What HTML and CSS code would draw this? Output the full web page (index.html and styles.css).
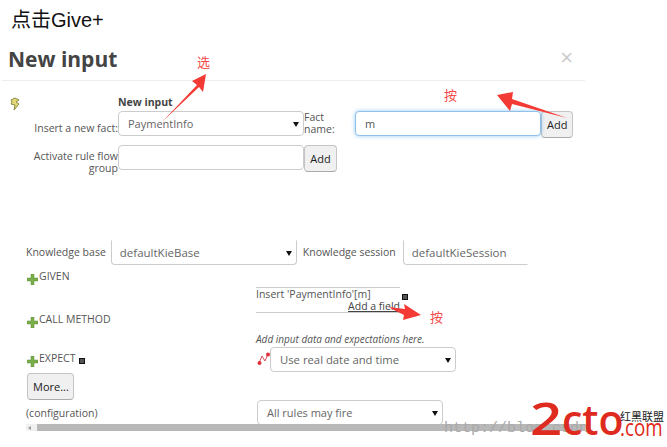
FILE: index.html
```html
<!DOCTYPE html>
<html lang="zh">
<head>
  <meta charset="UTF-8" />
  <title>New input</title>
  <link rel="stylesheet" href="styles.css">
</head>
<body>
  <div class="page">
    <p class="caption">点击Give+</p>

    <div class="modal">
      <header class="modal-head">
        <h3>New input</h3>
        <span class="close">×</span>
      </header>

      <!-- new fact form -->
      <section class="fact-form">
        <svg class="bolt" width="10" height="14" viewBox="0 0 10 14"><path d="M5 1 L9 3 L6 5 L9 7 L4 13 L5 8 L1 7 L2 5 L1 3 Z" fill="#e3d878" stroke="#8a8a3c"/></svg>
        <b class="fact-title">New input</b>
        <label class="fact-label">Insert a new fact:</label>
        <div class="field select">PaymentInfo<i class="arrow"></i></div>
        <label class="name-label">Fact name:</label>
        <div class="field focused">m</div>
        <button class="btn">Add</button>
        <label class="fact-label flow">Activate rule flow group</label>
        <div class="field flow-field"></div>
        <button class="btn flow-add">Add</button>
      </section>

      <!-- knowledge row -->
      <section class="kie-row">
        <label>Knowledge base</label>
        <div class="field select cut base">defaultKieBase<i class="arrow"></i></div>
        <label class="session-label">Knowledge session</label>
        <div class="field cut session">defaultKieSession</div>
      </section>

      <section class="scenario">
        <div class="left-col">
          <div class="section-title given"><svg class="plus" viewBox="0 0 11 11"><path d="M4 0h3v4h4v3H7v4H4V7H0V4h4z"/></svg>GIVEN</div>
          <div class="section-title method"><svg class="plus" viewBox="0 0 11 11"><path d="M4 0h3v4h4v3H7v4H4V7H0V4h4z"/></svg>CALL METHOD</div>
          <div class="section-title expect"><svg class="plus" viewBox="0 0 11 11"><path d="M4 0h3v4h4v3H7v4H4V7H0V4h4z"/></svg>EXPECT<i class="mini"></i></div>
          <button class="btn more">More...</button>
          <div class="config">(configuration)</div>
        </div>
        <div class="right-col">
          <div class="given-box">
            <div>Insert 'PaymentInfo'[m]</div>
            <div class="add-field"><u>Add a field</u></div>
            <i class="mini"></i>
          </div>
          <em class="hint">Add input data and expectations here.</em>
          <div class="date-row">
            <svg class="clock" width="13" height="14" viewBox="0 0 13 14"><path d="M2 11 L5 4 L8 9 L11 2" fill="none" stroke="#d8505a"/><circle cx="2.5" cy="11" r="2" fill="#e0303c"/><circle cx="11" cy="2.5" r="2" fill="#e0303c"/></svg>
            <div class="field select wide-text">Use real date and time<i class="arrow"></i></div>
          </div>
          <div class="field select fire">All rules may fire<i class="arrow"></i></div>
        </div>
      </section>
    </div>

    <div class="scrollbar"><i></i><span></span></div>

    <!-- annotations drawn over the screenshot -->
    <span class="note note-pick">选</span>
    <span class="note note-add">按</span>
    <span class="note note-field">按</span>
    <svg class="arrows" width="667" height="447" viewBox="0 0 667 447">
      <path d="M162 122 L197 85 L192 81 L206 74 L203 92 L199 87 Z"/>
      <path d="M567 118 L512 104 L510 111 L497 95 L513 92 L512 99 Z"/>
      <path d="M388 307 L405 309 L404 304 L421 315 L403 320 L404 315 Z"/>
    </svg>

    <div class="watermark">http://blog.csdn</div>
    <div class="logo">
      <span class="logo-two">2</span><span class="logo-cto">cto</span>
      <b class="logo-cn">红黑联盟</b>
      <span class="logo-com">.com</span>
    </div>
  </div>
</body>
</html>
```

FILE: styles.css
```css
* { box-sizing: border-box; }
body { margin: 0; background: #fff; overflow: hidden; }
.page {
  position: relative; width: 667px; height: 447px; overflow: hidden;
  font-family: "Open Sans", "Noto Sans CJK SC", sans-serif; font-size: 10.5px; color: #555;
}
.caption {
  margin: 0; height: 44px; padding: 8px 0 0 11px;
  font: 20px/24px "Liberation Sans", "Noto Sans CJK SC", sans-serif; color: #111;
}

/* modal */
.modal { width: 583px; height: 380px; margin-left: 2px; overflow: hidden; }
.modal-head {
  display: flex; justify-content: space-between; align-items: center;
  height: 37px; padding: 0 12px 6px 6px; border-bottom: 1px solid #eee;
}
.modal-head h3 { margin: 0; font: bold 21px/28px "Open Sans", sans-serif; color: #444; }
.close { font: 22px/20px "Liberation Sans", sans-serif; color: #ccc; margin-top: -3px; }

/* shared controls */
.field {
  position: relative; height: 25px; padding: 0 9px; line-height: 24px; font-size: 11px;
  background: #fff; border: 1px solid #ccc; border-radius: 4px; color: #666;
}
.field.focused {
  width: 186px; border-color: #8fc1ea; box-shadow: 0 0 4px rgba(82,168,236,.6); color: #555;
}
.select .arrow {
  position: absolute; right: 4px; top: 10px; width: 0; height: 0;
  border: 3px solid transparent; border-top: 5px solid #111; border-bottom: 0;
}
.btn {
  height: 27px; padding: 0 5px; font: 11px "Open Sans", sans-serif; color: #222;
  background: #f0f0f0; border: 1px solid #c4c4c4; border-bottom-color: #aaa; border-radius: 4px;
}
.mini {
  display: inline-block; width: 6px; height: 6px; background: #555; border: 1px solid #111;
}

/* fact form */
.fact-form {
  display: grid; position: relative; margin-left: -2px; padding-top: 16px;
  grid-template-columns: 118px 186px 51px 186px 33px;
  grid-template-rows: 14px 25px 34px;
}
.bolt { position: absolute; left: 10px; top: 16px; }
.fact-title { grid-column: 2 / 6; font-size: 10.5px; color: #444; line-height: 10px; }
.fact-label { grid-column: 1; text-align: right; align-self: end; line-height: 12px; padding-bottom: 2px; }
.name-label { line-height: 12px; }
.fact-form .btn { width: 32px; }
.fact-label.flow {
  align-self: start; height: 24px; margin-top: 14px; padding: 0 0 0 30px;
}
.flow-field { margin-top: 9px; }
.fact-form .flow-add { width: 33px; margin-top: 9px; }

/* knowledge row */
.kie-row {
  display: flex; align-items: flex-start; margin-top: 70px; padding-left: 24px; height: 29px; overflow: hidden;
}
.kie-row label { padding-top: 5px; }
.field.cut {
  padding: 0 8px; border-top-color: transparent; border-top-left-radius: 0; border-top-right-radius: 0; font-size: 11.5px;
}
.base { width: 186px; margin-left: 5px; }
.session-label { margin-left: 6px; }
.session {
  width: 125px; margin-left: 7px; border-right-color: transparent; border-bottom-right-radius: 0;
}

/* lower part */
.scenario { display: flex; padding-left: 24px; }
.left-col { width: 230px; }
.section-title { display: flex; align-items: flex-start; }
.section-title .mini { margin: 7px 0 0 4px; }
.plus { width: 11px; height: 11px; margin: 5px 1px 0 1px; fill: #7aae4a; stroke: #5c8c3a; stroke-width: .5; }
.given { height: 43px; }
.method { height: 39px; }
.expect { height: 22px; }
.more { display: block; width: 47px; height: 27px; margin-left: 1px; }
.config { margin-top: 6px; }
.right-col { width: 210px; margin-top: 18px; }
.given-box {
  position: relative; width: 144px; height: 26px; border-top: 1px solid #ccc; border-bottom: 1px solid #ccc;
  line-height: 12px;
}
.given-box .mini { position: absolute; left: 146px; top: 6px; }
.add-field { text-align: right; color: #444; }
.hint { display: block; margin-top: 20px; line-height: 13px; font-size: 10px; }
.date-row { display: flex; align-items: flex-start; margin-top: 1px; margin-left: 1px; }
.date-row .field { width: 186px; }
.wide-text { font-size: 11.3px; }
.clock { margin-top: 5px; }
.fire { width: 186px; margin-top: 28px; margin-left: 1px; }

/* scrollbar */
.scrollbar {
  position: absolute; left: 26px; top: 424px; width: 559px; height: 7px; display: flex; background: #f0f0f0;
}
.scrollbar i {
  width: 0; height: 0; margin: 2px 4px 0 2px; border: 2px solid transparent; border-right: 3px solid #999; border-left: 0;
}
.scrollbar span { flex: 1; margin-left: 2px; background: #b8b8b8; }

/* annotations */
.note { position: absolute; font: 13px/16px "Noto Sans CJK SC", sans-serif; color: #f44a4a; }
.note-pick { left: 197px; top: 54px; }
.note-add { left: 444px; top: 87px; }
.note-field { left: 430px; top: 309px; }
.arrows { position: absolute; left: 0; top: 0; fill: #f43a34; }

/* site watermark */
.watermark {
  position: absolute; left: 444px; top: 419px; font: 15px/20px "Liberation Mono", monospace; color: #aaa; white-space: nowrap;
}
.logo { position: absolute; left: 530px; top: 396px; width: 137px; height: 44px; color: #df2a20; }
.logo-two {
  position: absolute; left: 0; top: 0; font: 600 45px/44px "Open Sans", sans-serif;
  transform: scaleX(1.25); transform-origin: left top;
}
.logo-cto { position: absolute; left: 32px; top: 1px; font: 600 41px/44px "Open Sans", sans-serif; }
.logo-cn { position: absolute; left: 90px; top: 14px; font: 11px/12px "Noto Sans CJK SC", sans-serif; color: #222; white-space: nowrap; }
.logo-com {
  position: absolute; left: 90px; top: 21px; font: 24px/20px "Open Sans", sans-serif;
  transform: scaleX(.78); transform-origin: left top;
}
```
